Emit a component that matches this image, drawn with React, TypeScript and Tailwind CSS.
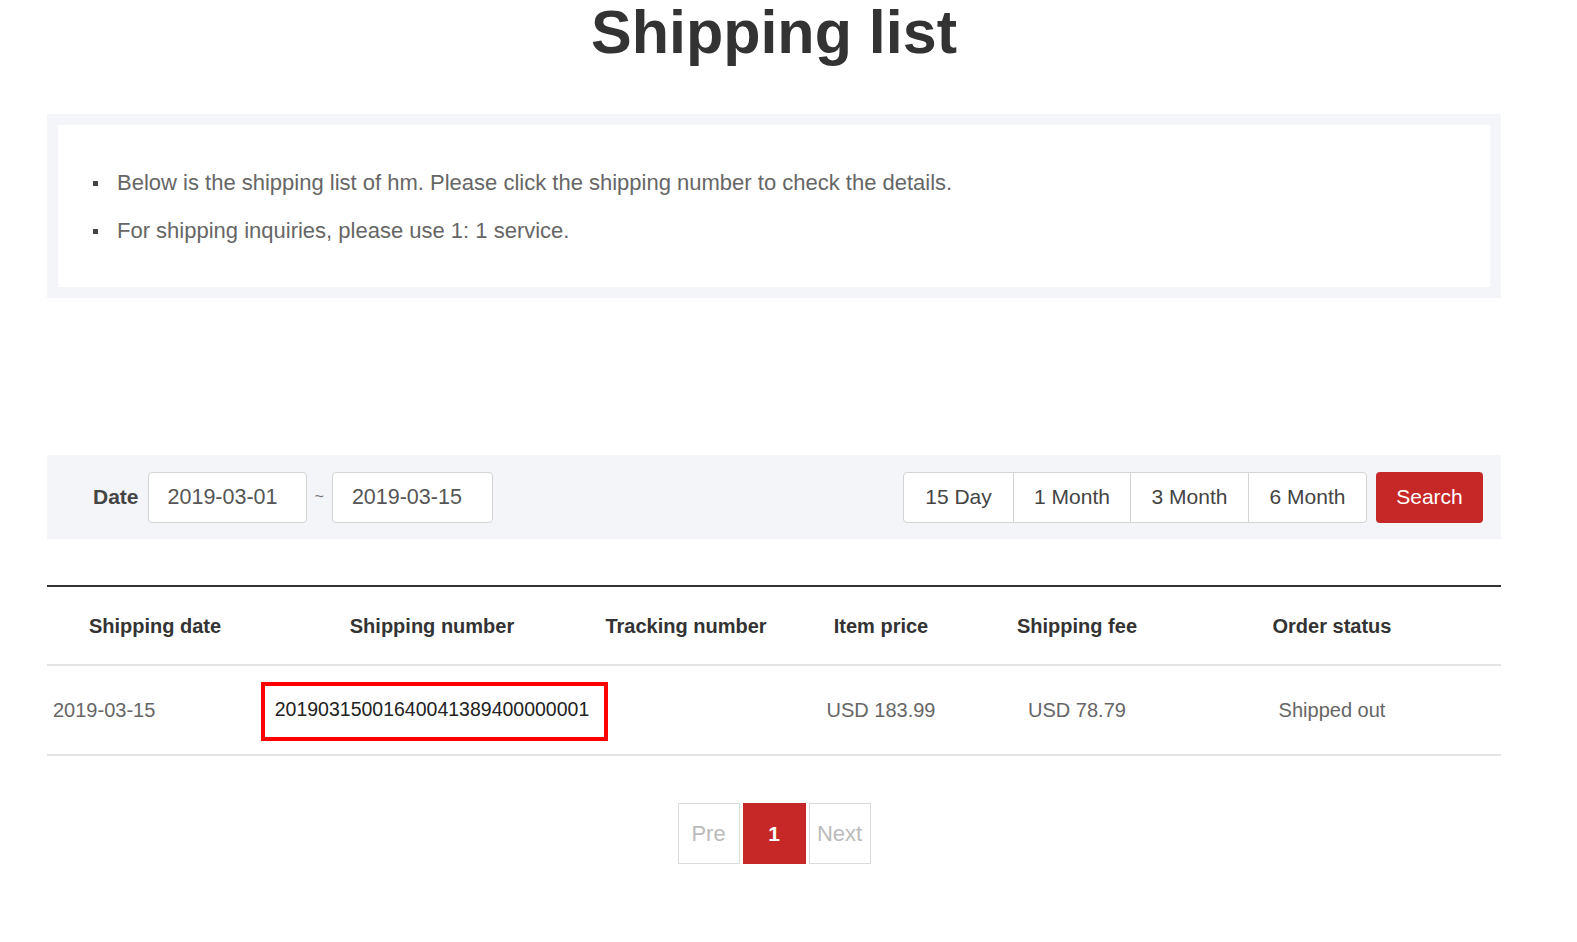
import React from "react";

const font = { fontFamily: '"Liberation Sans", Arial, Helvetica, sans-serif' };

export default function App() {
  return (
    <div className="min-h-[942px] bg-white" style={font}>
      <div className="ml-[47px] w-[1454px]">
        <h1 className="mt-[2px] text-center text-[61px] leading-[60px] font-bold text-[#333]">Shipping list</h1>

        <div className="mt-[52px] border-[11px] border-[#f4f5f9] bg-white pt-[34px] pb-[32px]">
          <ul className="pl-[35px]">
            <li className="flex items-center text-[22px] leading-[48px] text-[#666]">
              <span className="mr-[19px] inline-block h-[5px] w-[5px] bg-[#444]" />
              Below is the shipping list of hm. Please click the shipping number to check the details.
            </li>
            <li className="flex items-center text-[22px] leading-[48px] text-[#666]">
              <span className="mr-[19px] inline-block h-[5px] w-[5px] bg-[#444]" />
              For shipping inquiries, please use 1: 1 service.
            </li>
          </ul>
        </div>

        <div className="mt-[157px] flex h-[84px] items-center bg-[#f4f5f9] pl-[46px] pr-[18px]">
          <span className="mr-[9px] text-[21px] font-bold text-[#444]">Date</span>
          <div className="flex h-[51px] w-[159px] items-center rounded-[4px] border border-[#d4d4d4] bg-white pl-[19px] text-[21.5px] text-[#555]">2019-03-01</div>
          <span className="mx-[8px] text-[16px] text-[#777]">~</span>
          <div className="flex h-[51px] w-[161px] items-center rounded-[4px] border border-[#d4d4d4] bg-white pl-[19px] text-[21.5px] text-[#555]">2019-03-15</div>
          <div className="ml-auto flex h-[51px] overflow-hidden rounded-[4px] border border-[#d4d4d4] bg-white text-[21px] text-[#444]">
            <div className="flex w-[110px] items-center justify-center border-r border-[#d4d4d4]">15 Day</div>
            <div className="flex w-[117px] items-center justify-center border-r border-[#d4d4d4]">1 Month</div>
            <div className="flex w-[118px] items-center justify-center border-r border-[#d4d4d4]">3 Month</div>
            <div className="flex w-[117px] items-center justify-center">6 Month</div>
          </div>
          <div className="ml-[9px] flex h-[51px] w-[107px] items-center justify-center rounded-[4px] bg-[#c62828] text-[21px] text-white">Search</div>
        </div>

        <div className="mt-[46px] border-t-2 border-[#333]">
          <div className="flex h-[79px] items-center border-b-2 border-[#e4e4e4] text-[20px] font-bold text-[#333]">
            <div className="w-[216px] text-center">Shipping date</div>
            <div className="w-[338px] text-center">Shipping number</div>
            <div className="w-[170px] text-center">Tracking number</div>
            <div className="w-[220px] text-center">Item price</div>
            <div className="w-[172px] text-center">Shipping fee</div>
            <div className="w-[338px] text-center">Order status</div>
          </div>
          <div className="flex h-[90px] items-center border-b-2 border-[#e4e4e4] text-[20px] text-[#666]">
            <div className="w-[216px] pl-[6px]">2019-03-15</div>
            <div className="flex w-[338px] justify-center">
              <span className="relative text-[19.5px] text-[#222]">
                20190315001640041389400000001
                <span className="pointer-events-none absolute -left-[14px] -right-[19px] -top-[13px] -bottom-[16px] border-4 border-[#ff0000]" />
              </span>
            </div>
            <div className="w-[170px]" />
            <div className="w-[220px] text-center">USD 183.99</div>
            <div className="w-[172px] text-center">USD 78.79</div>
            <div className="w-[338px] text-center">Shipped out</div>
          </div>
        </div>

        <div className="mt-[47px] flex justify-center gap-[3px]">
          <div className="flex h-[61px] w-[62px] items-center justify-center border border-[#dcdcdc] text-[22px] text-[#bbb]">Pre</div>
          <div className="flex h-[61px] w-[63px] items-center justify-center border border-[#c62828] bg-[#c62828] text-[21px] font-bold text-white">1</div>
          <div className="flex h-[61px] w-[62px] items-center justify-center border border-[#dcdcdc] text-[22px] text-[#bbb]">Next</div>
        </div>
      </div>
    </div>
  );
}
